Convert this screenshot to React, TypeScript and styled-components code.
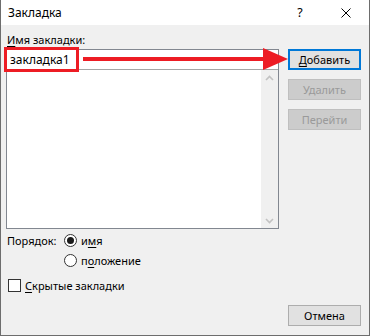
import React from "react";
import styled, { createGlobalStyle } from "styled-components";

const GlobalStyle = createGlobalStyle`
  html, body {
    margin: 0;
    padding: 0;
    background: #ffffff;
  }
  body {
    font-family: "Noto Sans", "Open Sans", "Liberation Sans", sans-serif;
    font-size: 11px;
    color: #000000;
  }
`;

const Window = styled.div`
  position: relative;
  width: 370px;
  height: 336px;
  box-sizing: border-box;
  border: 1px solid #6d6d6d;
  border-top: none;
  background: #f0f0f0;
  display: flex;
  flex-direction: column;
  overflow: hidden;
`;

const TitleBar = styled.div`
  height: 25px;
  background: #ffffff;
  display: flex;
  align-items: center;
  padding-left: 7px;
`;

const Title = styled.div`
  flex: 1;
  font-size: 12px;
`;

const TitleButton = styled.div`
  width: 46px;
  height: 25px;
  display: flex;
  align-items: center;
  justify-content: center;
  font-size: 12.5px;
`;

const Body = styled.div`
  flex: 1;
  display: flex;
  gap: 9px;
  padding: 7px 8px 9px 5px;
`;

const LeftColumn = styled.div`
  width: 273px;
  display: flex;
  flex-direction: column;
`;

const RightColumn = styled.div`
  width: 73px;
  display: flex;
  flex-direction: column;
  gap: 9px;
  padding-top: 17px;
`;

const FieldLabel = styled.div`
  height: 17px;
  line-height: 15px;
  padding-left: 1px;
`;

const Key = styled.span`
  text-decoration: underline;
  text-underline-offset: 2px;
`;

const ListBox = styled.div`
  height: 180px;
  box-sizing: border-box;
  border: 1px solid #828790;
  background: #ffffff;
  display: flex;
  flex-direction: column;
`;

const NameInput = styled.div`
  height: 20px;
  box-sizing: border-box;
  border-bottom: 1px solid #a5a5a5;
  padding-left: 3px;
  font-size: 12px;
  line-height: 19px;
`;

const ListArea = styled.div`
  flex: 1;
  display: flex;
`;

const ListItems = styled.div`
  flex: 1;
`;

const ScrollBar = styled.div`
  width: 17px;
  background: #f0f0f0;
  display: flex;
  flex-direction: column;
  justify-content: space-between;
  align-items: center;
  padding: 5px 0 4px;
`;

const OrderBlock = styled.div`
  margin-top: 1px;
  display: grid;
  grid-template-columns: 57px auto;
  grid-auto-rows: 20px;
  align-items: center;
  padding-left: 1px;
`;

const Choice = styled.label`
  display: flex;
  align-items: center;
  gap: 4px;
`;

const Radio = styled.span<{ $checked?: boolean }>`
  width: 13px;
  height: 13px;
  box-sizing: border-box;
  border: 1px solid #333333;
  border-radius: 50%;
  background: #ffffff;
  display: flex;
  align-items: center;
  justify-content: center;
  &::after {
    content: "";
    width: 7px;
    height: 7px;
    border-radius: 50%;
    background: ${(p) => (p.$checked ? "#1a1a1a" : "transparent")};
  }
`;

const CheckRow = styled.label`
  margin-top: 5px;
  height: 20px;
  display: flex;
  align-items: center;
  gap: 4px;
  padding-left: 2px;
`;

const CheckBox = styled.span`
  width: 13px;
  height: 13px;
  box-sizing: border-box;
  border: 1px solid #333333;
  background: #ffffff;
`;

const Button = styled.div<{ $variant?: "default" | "disabled" }>`
  height: 21px;
  box-sizing: border-box;
  display: flex;
  align-items: center;
  justify-content: center;
  background: ${(p) => (p.$variant === "disabled" ? "#cccccc" : "#e1e1e1")};
  color: ${(p) => (p.$variant === "disabled" ? "#9a9a9a" : "#000000")};
  border: ${(p) =>
    p.$variant === "default"
      ? "2px solid #0078d7"
      : p.$variant === "disabled"
      ? "1px solid #bfbfbf"
      : "1px solid #adadad"};
`;

const Spacer = styled.div`
  flex: 1;
`;

const Highlight = styled.div`
  position: absolute;
  left: 3px;
  top: 47px;
  width: 75px;
  height: 25px;
  box-sizing: border-box;
  border: 3px solid #ed1c24;
`;

const Arrow = styled.svg`
  position: absolute;
  left: 82px;
  top: 48px;
`;

function Chevron({ up }: { up?: boolean }) {
  return (
    <svg width="9" height="6" viewBox="0 0 9 6">
      <path
        d={up ? "M1 5 L4.5 1.5 L8 5" : "M1 1 L4.5 4.5 L8 1"}
        fill="none"
        stroke="#c2c2c2"
        strokeWidth="1.6"
      />
    </svg>
  );
}

export default function App() {
  return (
    <>
      <GlobalStyle />
      <Window>
        <TitleBar>
          <Title>Закладка</Title>
          <TitleButton>?</TitleButton>
          <TitleButton>
            <svg width="10" height="10" viewBox="0 0 10 10">
              <path d="M0.5 0.5 L9.5 9.5 M9.5 0.5 L0.5 9.5" stroke="#000" strokeWidth="1" />
            </svg>
          </TitleButton>
        </TitleBar>
        <Body>
          <LeftColumn>
            <FieldLabel>
              <Key>И</Key>мя закладки:
            </FieldLabel>
            <ListBox>
              <NameInput>закладка1</NameInput>
              <ListArea>
                <ListItems />
                <ScrollBar>
                  <Chevron up />
                  <Chevron />
                </ScrollBar>
              </ListArea>
            </ListBox>
            <OrderBlock>
              <span>Порядок:</span>
              <Choice>
                <Radio $checked />
                <span>
                  и<Key>м</Key>я
                </span>
              </Choice>
              <span />
              <Choice>
                <Radio />
                <span>
                  п<Key>о</Key>ложение
                </span>
              </Choice>
            </OrderBlock>
            <CheckRow>
              <CheckBox />
              <span>
                <Key>С</Key>крытые закладки
              </span>
            </CheckRow>
          </LeftColumn>
          <RightColumn>
            <Button $variant="default">
              <span>
                <Key>Д</Key>обавить
              </span>
            </Button>
            <Button $variant="disabled">Удалить</Button>
            <Button $variant="disabled">Перейти</Button>
            <Spacer />
            <Button>Отмена</Button>
          </RightColumn>
        </Body>
        <Highlight />
        <Arrow width="206" height="22" viewBox="0 0 206 22">
          <rect x="0" y="9" width="184" height="4" fill="#ed1c24" />
          <polygon points="180,0 205,11 180,22" fill="#ed1c24" />
        </Arrow>
      </Window>
    </>
  );
}
